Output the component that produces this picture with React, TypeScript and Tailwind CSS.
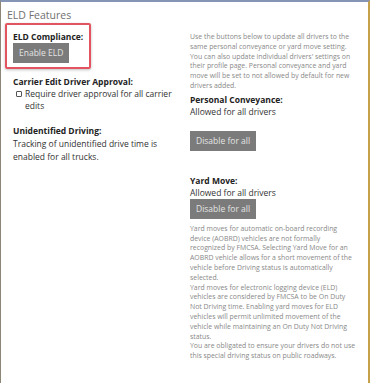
export default function App() {
  return (
    <div className="w-[370px] h-[383px] overflow-hidden bg-white border-t-2 border-t-[#8494b4] border-l border-l-[#8d8576] border-r-2 border-r-[#c7a04c] font-['Open_Sans',sans-serif] text-[#333]">
      <div className="flex">
        <div className="w-[184px] shrink-0 pl-[4px]">
          <h1 className="mt-[5px] ml-[2px] text-[10.5px] leading-[16px] text-[#707070]">ELD Features</h1>
          <div className="w-[86px] border-2 border-[#e25560] rounded-[2px] shadow-[0_1px_3px_rgba(0,0,0,0.25)] pl-[6px] pr-[1px] pt-[6px] pb-[4px]">
            <div className="text-[8.5px] leading-[12px] font-bold text-[#222] whitespace-nowrap">ELD Compliance:</div>
            <button className="block bg-[#7b7b7b] text-[#e4e4e4] text-[8.5px] leading-[12px] px-[6px] py-[4px]">Enable ELD</button>
          </div>
          <div className="pl-[8px] mt-[7px]">
            <div className="text-[8.5px] leading-[12px] font-bold text-[#222] whitespace-nowrap">Carrier Edit Driver Approval:</div>
            <label className="flex items-start gap-[3px] ml-[3px] text-[8.5px] leading-[12px] text-[#333] whitespace-nowrap">
              <span className="mt-[3px] w-[6px] h-[6px] shrink-0 border border-[#555] rounded-[1px] bg-white" />
              <span>Require driver approval for all carrier<br />edits</span>
            </label>
            <div className="mt-[13px] text-[8.5px] leading-[12px] font-bold text-[#222] whitespace-nowrap">Unidentified Driving:</div>
            <p className="text-[8.5px] leading-[13px] text-[#333] whitespace-nowrap">
              Tracking of unidentified drive time is<br />enabled for all trucks.
            </p>
          </div>
        </div>
        <div className="flex-1 pr-[14px] pl-[5px] pt-[30px]">
          <p className="text-[6.9px] leading-[9.8px] text-[#888]">
            Use the buttons below to update all drivers to the same personal conveyance or yard move setting. You can also update individual drivers' settings on their profile page. Personal conveyance and yard move will be set to not allowed by default for new drivers added.
          </p>
          <div className="mt-[3px] text-[8.5px] leading-[12px] font-bold text-[#222]">Personal Conveyance:</div>
          <div className="text-[8.5px] leading-[12px] text-[#333]">Allowed for all drivers</div>
          <button className="block mt-[13px] bg-[#7b7b7b] text-[#e4e4e4] text-[8.5px] leading-[12px] px-[6px] py-[4px]">Disable for all</button>
          <div className="mt-[24px] text-[8.5px] leading-[12px] font-bold text-[#222]">Yard Move:</div>
          <div className="text-[8.5px] leading-[12px] text-[#333]">Allowed for all drivers</div>
          <button className="block bg-[#7b7b7b] text-[#e4e4e4] text-[8.5px] leading-[12px] px-[6px] py-[4px]">Disable for all</button>
          <p className="mt-[5px] text-[6.9px] leading-[9.8px] text-[#888]">
            Yard moves for automatic on-board recording device (AOBRD) vehicles are not formally recognized by FMCSA. Selecting Yard Move for an AOBRD vehicle allows for a short movement of the vehicle before Driving status is automatically selected.
            <br />
            Yard moves for electronic logging device (ELD) vehicles are considered by FMCSA to be On Duty Not Driving time. Enabling yard moves for ELD vehicles will permit unlimited movement of the vehicle while maintaining an On Duty Not Driving status.
          </p>
          <p className="text-[6.9px] leading-[9.8px] text-[#888] whitespace-nowrap">
            You are obligated to ensure your drivers do not use
            <br />
            this special driving status on public roadways.
          </p>
        </div>
      </div>
    </div>
  )
}
